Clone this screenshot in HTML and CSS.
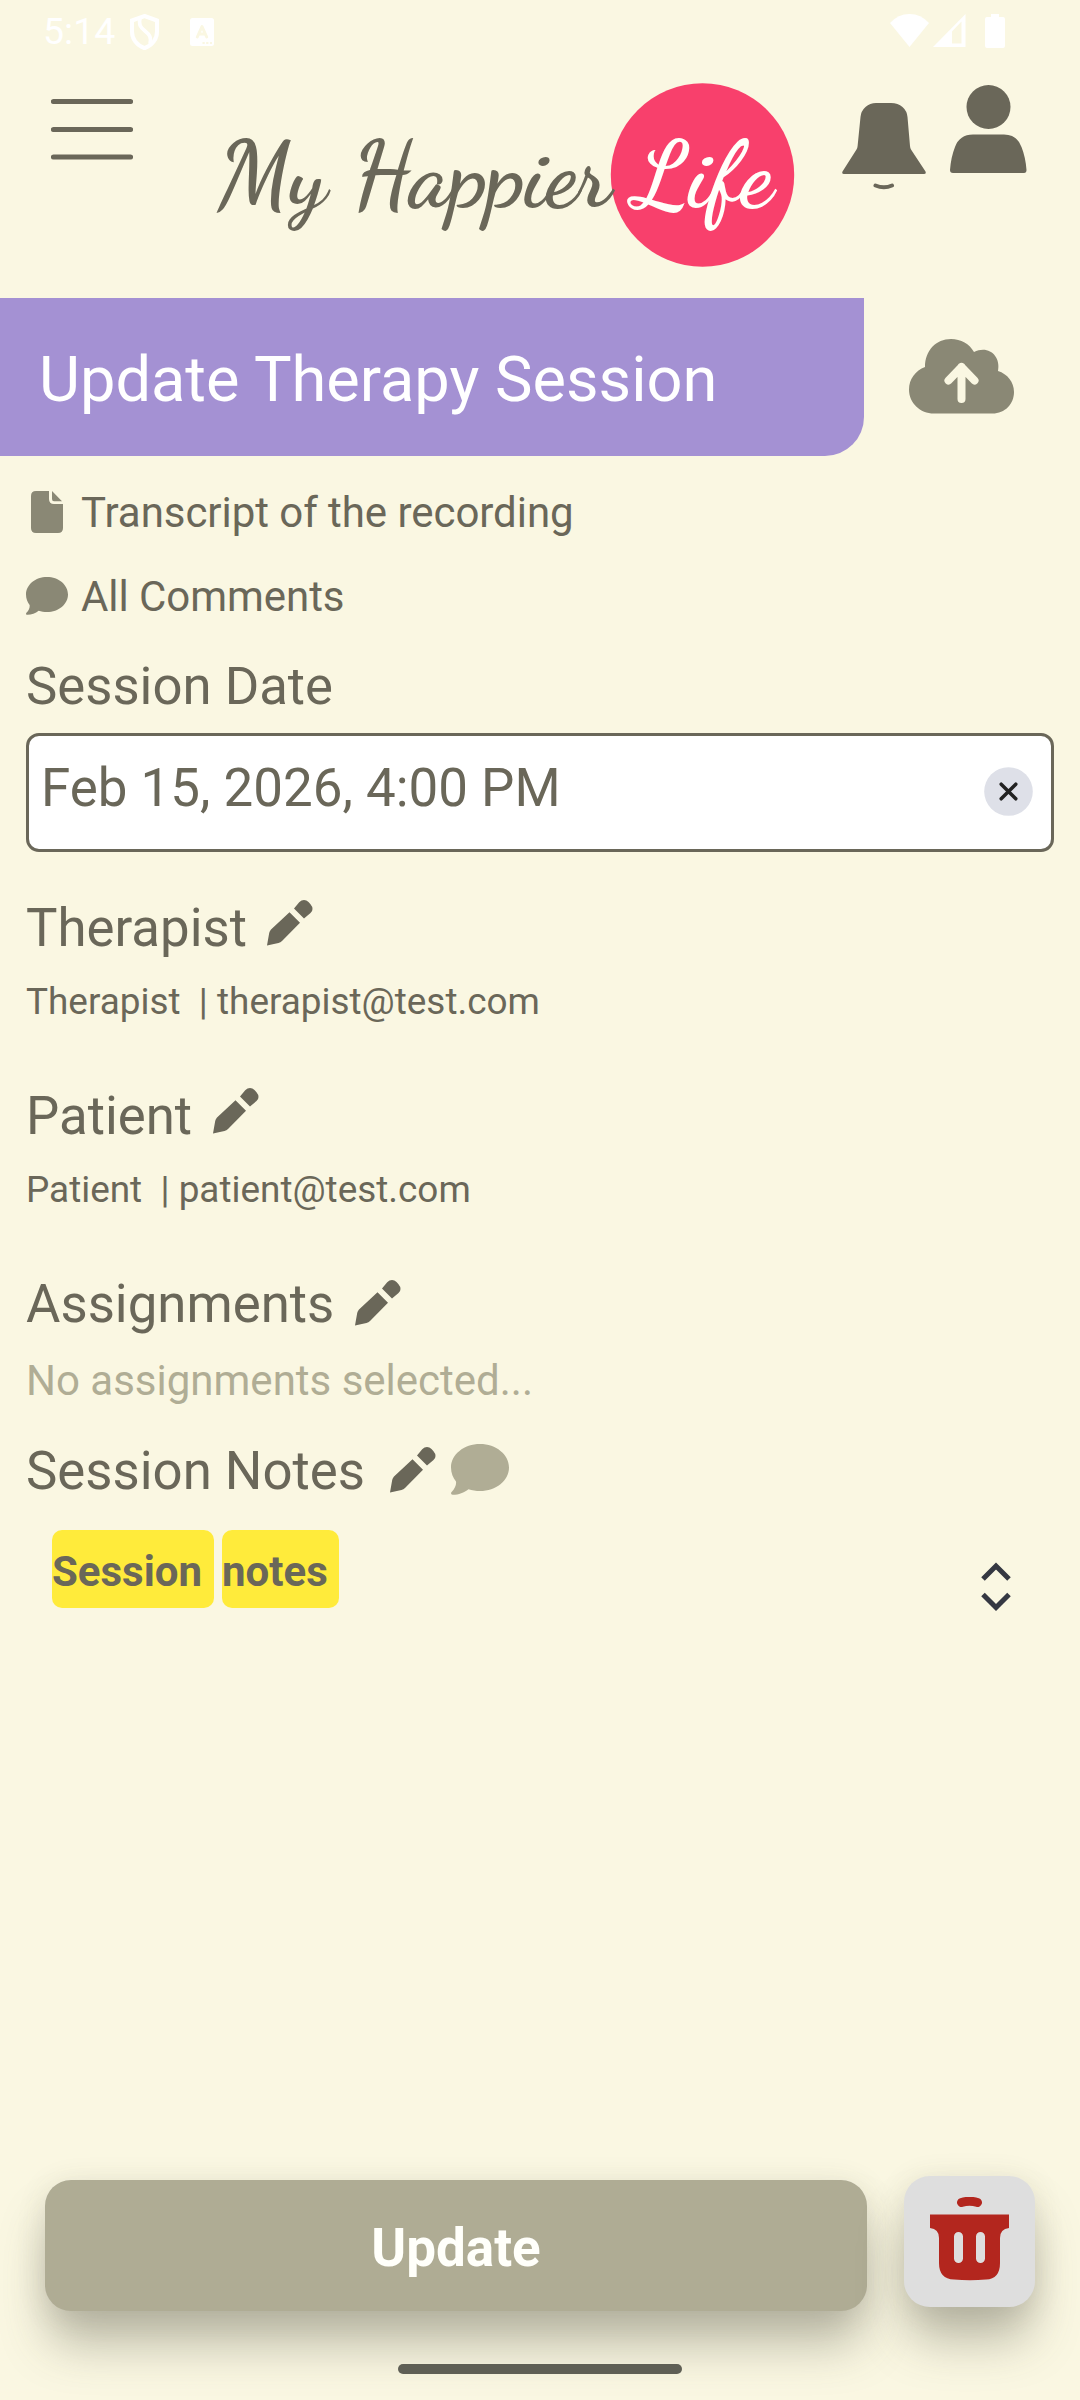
FILE: index.html
```html
<!DOCTYPE html>
<html lang="en">
<head>
<meta charset="utf-8">
<title>Update Therapy Session</title>
<link rel="stylesheet" href="styles.css">
</head>
<body>
<svg class="defs" width="0" height="0" aria-hidden="true">
  <symbol id="pencil" viewBox="0 0 46 46">
    <path d="M0 45.5 2.2 33Q2.6 31 4 29.500L22.500 12.200 33 22.700 15 41Q13.500 42.600 11.500 43ZM27 8.500 32.200 2.300Q34.500 0 37 0T41.500 2L43.500 4.200Q45.500 6.500 45.500 9T43.500 13L37 18.500Z"/>
  </symbol>
  <symbol id="bubble" viewBox="0 0 58 51">
    <path d="M29 0C45 0 58 10.500 58 23.500S45 47 29 47C25 47 21 46.400 17.500 45.200C13 48.500 7 51 1.500 50.800C0 50.700-.4 49 .6 48C4 44.500 5.500 41 5 37.500C2 33.800 0 29 0 23.500C0 10.500 13 0 29 0Z"/>
  </symbol>
</svg>
<div class="screen">
  <div class="status">
    <span class="clock">5:14</span>
    <svg class="shield" width="29" height="36" viewBox="0 0 29 36"><path d="M14.500 2 27 6.500V17.500C27 25.500 22 31 14.500 34.200C7 31 2 25.500 2 17.500V6.500Z" fill="none" stroke="#fff" stroke-width="4"/><path d="M10 4C8.500 11 10.500 13.500 15 17S21.500 23 20 30" fill="none" stroke="#fff" stroke-width="3.600"/></svg>
    <svg class="abox" width="24" height="28" viewBox="0 0 24 28"><rect width="24" height="28" rx="2.500" fill="#fff"/><path d="M7.300 19 12 8.500 16.700 19M9 16H15" fill="none" stroke="#faf7e2" stroke-width="3" stroke-linecap="round" stroke-linejoin="round"/><path d="M12.500 25H22" stroke="#faf7e2" stroke-width="2" stroke-dasharray="2.200 1.500"/></svg>
    <svg class="wifi" width="39" height="33" viewBox="0 0 39 33"><path d="M0 9Q8 0 19.500 0T39 9L19.500 33Z" fill="#fff"/></svg>
    <svg class="signal" width="33" height="33" viewBox="0 0 33 33"><path fill="#fff" fill-rule="evenodd" d="M0 33 32.500 0V33ZM19 17.500V29.500H28.500V7.500Z"/></svg>
    <svg class="battery" width="20" height="34" viewBox="0 0 20 34"><path fill="#fff" d="M6 0H14V3H18Q20 3 20 5V32Q20 34 18 34H2Q0 34 0 32V5Q0 3 2 3H6Z"/></svg>
  </div>
  <header class="header">
    <svg class="menu" width="82" height="62" viewBox="0 0 82 62"><path d="M2.500 3.500H79.500M2.500 31.500H79.500M2.500 59H79.500" stroke="#6a6759" stroke-width="5.200" stroke-linecap="round"/></svg>
    <svg class="logo" width="580" height="186" viewBox="215 82 580 186">
      <circle cx="702.500" cy="175" r="91.700" fill="#f8406c"/>
      <text x="217" y="204.500" textLength="110" lengthAdjust="spacingAndGlyphs" fill="#6a6759">My</text>
      <text x="352" y="204.500" textLength="259" lengthAdjust="spacingAndGlyphs" fill="#6a6759">Happier</text>
      <text x="633" y="204.500" textLength="140" lengthAdjust="spacingAndGlyphs" fill="#fffffa">Life</text>
    </svg>
    <svg class="bell" width="84" height="87" viewBox="0 0 84 87"><path fill="#6a6759" d="M34 0H49Q56 0 60.500 4T65.500 14L68 43Q68.200 45 69 46.500L83.500 68.500Q84.500 71 82 71H2Q-.5 71 .5 68.500L14.500 46.500Q15.400 45 15.600 43L18.500 14Q19 8 23.500 4T34 0Z"/><path d="M33.500 82.500Q42 86 50 82.500" fill="none" stroke="#6a6759" stroke-width="4" stroke-linecap="round"/></svg>
    <svg class="person" width="77" height="88" viewBox="0 0 77 88"><circle cx="38.500" cy="22" r="22" fill="#6a6759"/><path fill="#6a6759" d="M23 49.500H54Q67 49.500 71.500 62Q75.500 72 76.500 85Q76.500 88 74 88H3Q0 88 0 85Q1 72 5 62Q9.500 49.500 23 49.500Z"/></svg>
  </header>
  <div class="titlebar">
    <h1 class="title">Update Therapy Session</h1>
    <svg class="cloud" width="105" height="75" viewBox="0 0 105 75"><path fill="#8a8875" d="M25 74.500C11 74.500 0 64 0 50.500C0 40 6.500 31.500 16 28C16 11.500 27 0 42 0C52 0 60.500 5 65 13C68 11.400 71 10.700 74 10.700C84 10.700 91.500 20 89 32C98.500 35 105 43 105 53C105 65 96 74.500 83.500 74.500Z"/><path d="M52.500 60V28M39.500 41.500 52.500 28 65.500 41.500" fill="none" stroke="#faf7e2" stroke-width="8" stroke-linecap="round" stroke-linejoin="round"/></svg>
  </div>
  <main class="main">
    <div class="link"><span class="linkicon"><svg width="32" height="42" viewBox="0 0 32 42"><path fill="#8a8875" d="M5 0H18V8Q18 13 23 13H32V37Q32 42 27 42H5Q0 42 0 37V5Q0 0 5 0ZM21 0 31 10.300H23Q21 10.300 21 8Z"/></svg></span><span>Transcript of the recording</span></div>
    <div class="link"><span class="linkicon"><svg class="mid" width="42" height="38" viewBox="0 0 58 51" preserveAspectRatio="none"><use href="#bubble" width="58" height="51"/></svg></span><span>All Comments</span></div>
    <div class="label">Session Date</div>
    <div class="field"><span class="date">Feb 15, 2026, 4:00 PM</span><svg width="49" height="49" viewBox="0 0 49 49"><circle cx="24.500" cy="24.500" r="24.300" fill="#dee0e8"/><path d="M17.200 17.200 31.800 31.800M31.800 17.200 17.200 31.800" stroke="#222" stroke-width="3.500" stroke-linecap="round"/></svg></div>
    <section class="person-block">
      <div class="heading"><span>Therapist</span><svg class="pencil up" width="46" height="46"><use href="#pencil"/></svg></div>
      <div class="sub">Therapist&nbsp; | therapist@test.com</div>
    </section>
    <section class="person-block">
      <div class="heading"><span>Patient</span><svg class="pencil up" width="46" height="46"><use href="#pencil"/></svg></div>
      <div class="sub">Patient&nbsp; | patient@test.com</div>
    </section>
    <section class="assign">
      <div class="heading"><span>Assignments</span><svg class="pencil" width="46" height="46"><use href="#pencil"/></svg></div>
      <div class="empty">No assignments selected...</div>
    </section>
    <section>
      <div class="heading notes-heading"><span>Session Notes</span><svg class="pencil" width="46" height="46"><use href="#pencil"/></svg><svg class="comment" width="58" height="51"><use href="#bubble"/></svg></div>
      <div class="notes">
        <span class="mark first">Session</span><span class="mark">notes</span>
        <svg class="expand" width="30" height="50" viewBox="0 0 30 50"><path d="M2 17 15 4 28 17M2 32.500 15 45.500 28 32.500" fill="none" stroke="#353842" stroke-width="5"/></svg>
      </div>
    </section>
  </main>
  <footer class="footer">
    <button class="update">Update</button>
    <button class="delete"><svg width="79" height="84" viewBox="0 0 79 84"><path fill="#b3261e" fill-rule="evenodd" d="M0 17.500H79V31Q70 32 70 41V66Q70 82 56 82.500Q40 84 24 82.500Q9 82 9 66V41Q9 32 0 31ZM24 39.500V61.500A4.500 4.500 0 0 0 33 61.500V39.500A4.500 4.500 0 0 0 24 39.500ZM46 39.500V61.500A4.500 4.500 0 0 0 55 61.500V39.500A4.500 4.500 0 0 0 46 39.500Z"/><path d="M31.500 5.500Q39.500 3 47.500 5.500" fill="none" stroke="#b3261e" stroke-width="9" stroke-linecap="round"/></svg></button>
  </footer>
  <div class="homebar"></div>
</div>
</body>
</html>
```
FILE: styles.css
```css
* { box-sizing: border-box; }
body { margin: 0; background: #faf7e2; color: #6a6759; font-family: Roboto, "Liberation Sans", sans-serif; }
svg { display: block; flex: none; }
.defs { position: absolute; }
.screen { width: 1080px; height: 2400px; display: flex; flex-direction: column; overflow: hidden; white-space: nowrap; }

.status { height: 64px; display: flex; align-items: flex-start; padding: 0 75px 0 43px; color: #fff; }
.clock { width: 87px; font-size: 37.500px; line-height: 63px; }
.shield { margin-top: 14px; }
.abox { margin: 18px auto 0 31px; }
.wifi { margin-top: 14px; }
.signal { margin: 14px 19px 0 4px; }
.battery { margin-top: 14px; }

.header { height: 234px; display: flex; align-items: flex-start; padding-left: 51px; }
.menu { margin: 34px 82px 0 0; }
.logo { margin: 18px 47px 0 0; font-family: "Dancing Script", "Liberation Serif", serif; font-weight: 700; font-size: 92px; }
.bell { margin: 39px 24px 0 0; }
.person { margin-top: 21px; }

.titlebar { display: flex; height: 158px; align-items: center; }
.title { margin: 0 45px 0 0; width: 864px; height: 158px; padding: 2px 0 0 39px; background: #a491d3; color: #fff; border-radius: 0 0 39px 0; font-size: 63.150px; font-weight: 400; line-height: 158px; }
.cloud { margin-bottom: 1px; }

.main { flex: 1; padding: 14px 26px 0; }
.link { display: flex; align-items: center; height: 84px; font-size: 42px; letter-spacing: -.05px; }
.linkicon { width: 42px; margin-right: 13px; display: flex; justify-content: center; }
.mid { fill: #8a8875; }
.label { height: 95px; line-height: 97px; font-size: 52.700px; }
.field { height: 119px; border: 3px solid #6a6759; border-radius: 13px; background: #fff; display: flex; align-items: center; justify-content: space-between; padding: 0 18px 2px 12px; font-size: 52.900px; }
.date { padding-bottom: 7px; }
.person-block { height: 188.300px; }
.field + .person-block { margin-top: 38px; }
.heading { display: flex; align-items: center; height: 76px; font-size: 52.750px; }
.pencil { margin: 0 0 2px 20.500px; fill: #6a6759; }
.pencil.up { margin-bottom: 11px; }
.sub { font-size: 36.900px; line-height: 71px; }
.empty { font-size: 42px; line-height: 76px; color: #b0ad95; }
.assign { height: 167px; margin-top: -1px; }
.assign .empty { padding-top: 1px; }
.notes-heading .pencil { margin-left: 25px; }
.comment { margin: 0 0 2px 15px; fill: #b0ad95; }
.notes { display: flex; margin: 21px 0 0 26px; }
.mark { width: 117px; height: 78px; padding-top: 3px; background: #ffeb3b; border-radius: 10px; font-size: 42px; font-weight: 700; line-height: 77px; }
.mark.first { width: 162px; margin-right: 8px; }
.expand { margin: 32px 43px 0 auto; }

.footer { display: flex; padding: 0 45px; height: 188px; }
button { border: 0; padding: 0; border-radius: 26px; height: 131px; font-family: inherit; box-shadow: 0 36px 48px -4px rgba(75, 75, 60, .36), 0 4px 30px rgba(75, 75, 60, .12); }
.update { width: 822px; margin: 4px 37px 0 0; padding-top: 4px; background: #afac94; color: #fffffa; font-size: 53px; font-weight: 700; }
.delete { width: 131px; display: flex; justify-content: center; padding-top: 21px; background: #dedede; }
.homebar { width: 284px; height: 10px; margin: 0 auto 26px; border-radius: 5px; background: #5f5f55; position: relative; }
```
